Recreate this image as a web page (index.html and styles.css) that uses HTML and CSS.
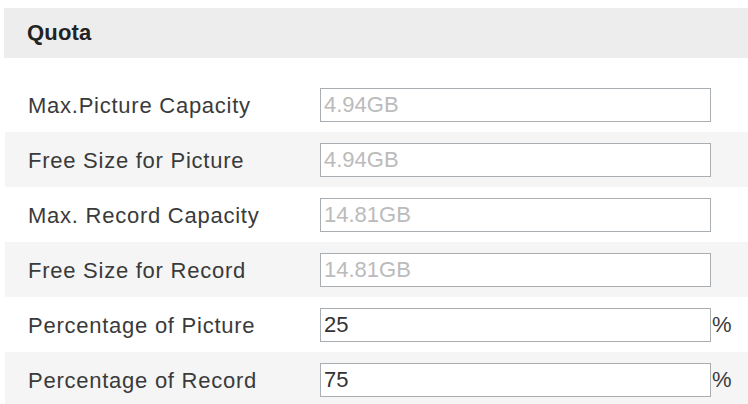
FILE: index.html
```html
<!DOCTYPE html>
<html>
<head>
<meta charset="utf-8">
<link rel="stylesheet" href="styles.css">
</head>
<body>
<div class="panel">
  <div class="header">Quota</div>
  <div class="rows">
    <div class="row">
      <span class="label">Max.Picture Capacity</span>
      <input class="field disabled" type="text" value="4.94GB" disabled>
    </div>
    <div class="row">
      <span class="label">Free Size for Picture</span>
      <input class="field disabled" type="text" value="4.94GB" disabled>
    </div>
    <div class="row">
      <span class="label">Max. Record Capacity</span>
      <input class="field disabled" type="text" value="14.81GB" disabled>
    </div>
    <div class="row">
      <span class="label">Free Size for Record</span>
      <input class="field disabled" type="text" value="14.81GB" disabled>
    </div>
    <div class="row">
      <span class="label">Percentage of Picture</span>
      <input class="field" type="text" value="25">
      <span class="unit">%</span>
    </div>
    <div class="row">
      <span class="label">Percentage of Record</span>
      <input class="field" type="text" value="75">
      <span class="unit">%</span>
    </div>
  </div>
</div>
</body>
</html>
```
FILE: styles.css
```css
html, body {
  margin: 0;
  padding: 0;
  background: #ffffff;
  overflow: hidden;
}
body {
  font-family: "Liberation Sans", Arial, sans-serif;
  color: #333333;
}
.panel {
  width: 748px;
  height: 404px;
  padding-top: 8px;
  box-sizing: border-box;
}
.header {
  margin-left: 4px;
  height: 50px;
  background: #ededed;
  display: flex;
  align-items: center;
  padding-left: 23px;
  font-weight: bold;
  font-size: 22px;
  letter-spacing: 0.2px;
  color: #222222;
}
.rows {
  margin-top: 19px;
  margin-left: 5px;
}
.row {
  height: 55px;
  display: flex;
  align-items: center;
}
.row:nth-child(even) {
  background: #f5f5f5;
}
.label {
  width: 292px;
  padding-left: 23px;
  padding-top: 2px;
  font-size: 22px;
  letter-spacing: 0.75px;
  color: #3a3a3a;
  white-space: nowrap;
}
.field {
  width: 391px;
  height: 34px;
  box-sizing: border-box;
  margin: 0;
  padding: 0 3px;
  border: 1px solid #a9aeb3;
  background: #ffffff;
  font-family: "Liberation Sans", Arial, sans-serif;
  font-size: 22px;
  color: #333333;
  outline: none;
}
.field.disabled {
  color: #bbbbbb;
  -webkit-text-fill-color: #bbbbbb;
}
.unit {
  margin-left: 1px;
  font-size: 22px;
  color: #3a3a3a;
}
```
